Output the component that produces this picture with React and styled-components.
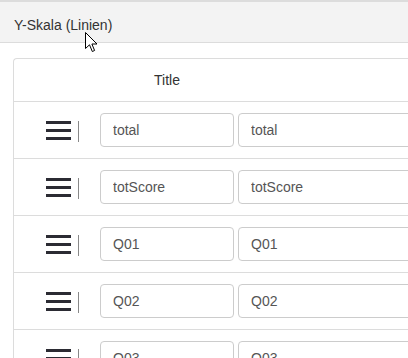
import React from "react";
import styled, { createGlobalStyle } from "styled-components";

const GlobalStyle = createGlobalStyle`
  html, body {
    margin: 0;
    padding: 0;
    background: #fff;
    overflow: hidden;
  }
  body {
    font-family: "Liberation Sans", Arial, sans-serif;
    font-size: 14px;
    color: #333;
  }
`;

const Panel = styled.div`
  position: relative;
  width: 408px;
  height: 358px;
  overflow: hidden;
  border-top: 2px solid #dcdcdc;
  box-sizing: border-box;
`;

const Heading = styled.div`
  height: 41px;
  padding: 5px 14px 0;
  display: flex;
  align-items: center;
  background-color: #f3f3f3;
  border-bottom: 1px solid #dcdcdc;
  color: #333;
  font-size: 14px;
  box-sizing: border-box;
`;

const Body = styled.div`
  padding: 15px 0 0 13px;
`;

const Table = styled.div`
  width: 480px;
  border-left: 1px solid #dcdcdc;
  border-top: 1px solid #dcdcdc;
  border-top-left-radius: 4px;
`;

const HeaderRow = styled.div`
  display: flex;
  height: 42px;
  align-items: center;
`;

const Row = styled.div`
  display: flex;
  align-items: center;
  border-top: 1px solid #dcdcdc;
  padding: 11px 0;
`;

const HandleCell = styled.div`
  width: 86px;
  height: 34px;
  padding: 8px 0 0 32px;
  box-sizing: border-box;
  display: flex;
  align-items: flex-start;
  gap: 7px;
`;

const BarsIcon = styled.svg`
  display: block;
`;

const Cell = styled.div`
  width: ${(p) => p.$width}px;
  margin-right: 4px;
  text-align: center;
`;

const Input = styled.input`
  display: block;
  width: 100%;
  height: 34px;
  box-sizing: border-box;
  padding: 6px 12px;
  border: 1px solid #ccc;
  border-radius: 4px;
  font-family: "Liberation Sans", Arial, sans-serif;
  font-size: 14px;
  color: #555;
  background: #fff;
  outline: none;
`;

const Divider = styled.span`
  width: 1px;
  height: 21px;
  background: #888;
`;

const Cursor = styled.svg`
  position: absolute;
  left: 85px;
  top: 30px;
`;

const Bars = () => (
  <BarsIcon width="25" height="19" viewBox="0 0 25 19">
    <rect x="0" y="0" width="25" height="3" fill="#2b2b33" />
    <rect x="0" y="8" width="25" height="3" fill="#2b2b33" />
    <rect x="0" y="16" width="25" height="3" fill="#2b2b33" />
  </BarsIcon>
);

const rows = ["total", "totScore", "Q01", "Q02", "Q03"];

export default function App() {
  return (
    <>
      <GlobalStyle />
      <Panel>
        <Heading>Y-Skala (Linien)</Heading>
        <Body>
          <Table>
            <HeaderRow>
              <HandleCell />
              <Cell $width={134}>Title</Cell>
            </HeaderRow>
            {rows.map((r) => (
              <Row key={r}>
                <HandleCell>
                  <Bars />
                  <Divider />
                </HandleCell>
                <Cell $width={134}>
                  <Input defaultValue={r} readOnly />
                </Cell>
                <Cell $width={200}>
                  <Input defaultValue={r} readOnly />
                </Cell>
              </Row>
            ))}
          </Table>
        </Body>
        <Cursor width="13" height="21" viewBox="0 0 13 21">
          <path
            d="M0.5 0.5 L0.5 16.5 L4.5 12.8 L7.3 19.5 L9.6 18.5 L6.9 12 L12 12 Z"
            fill="#fff"
            stroke="#000"
            strokeWidth="1"
            strokeLinejoin="miter"
          />
        </Cursor>
      </Panel>
    </>
  );
}
